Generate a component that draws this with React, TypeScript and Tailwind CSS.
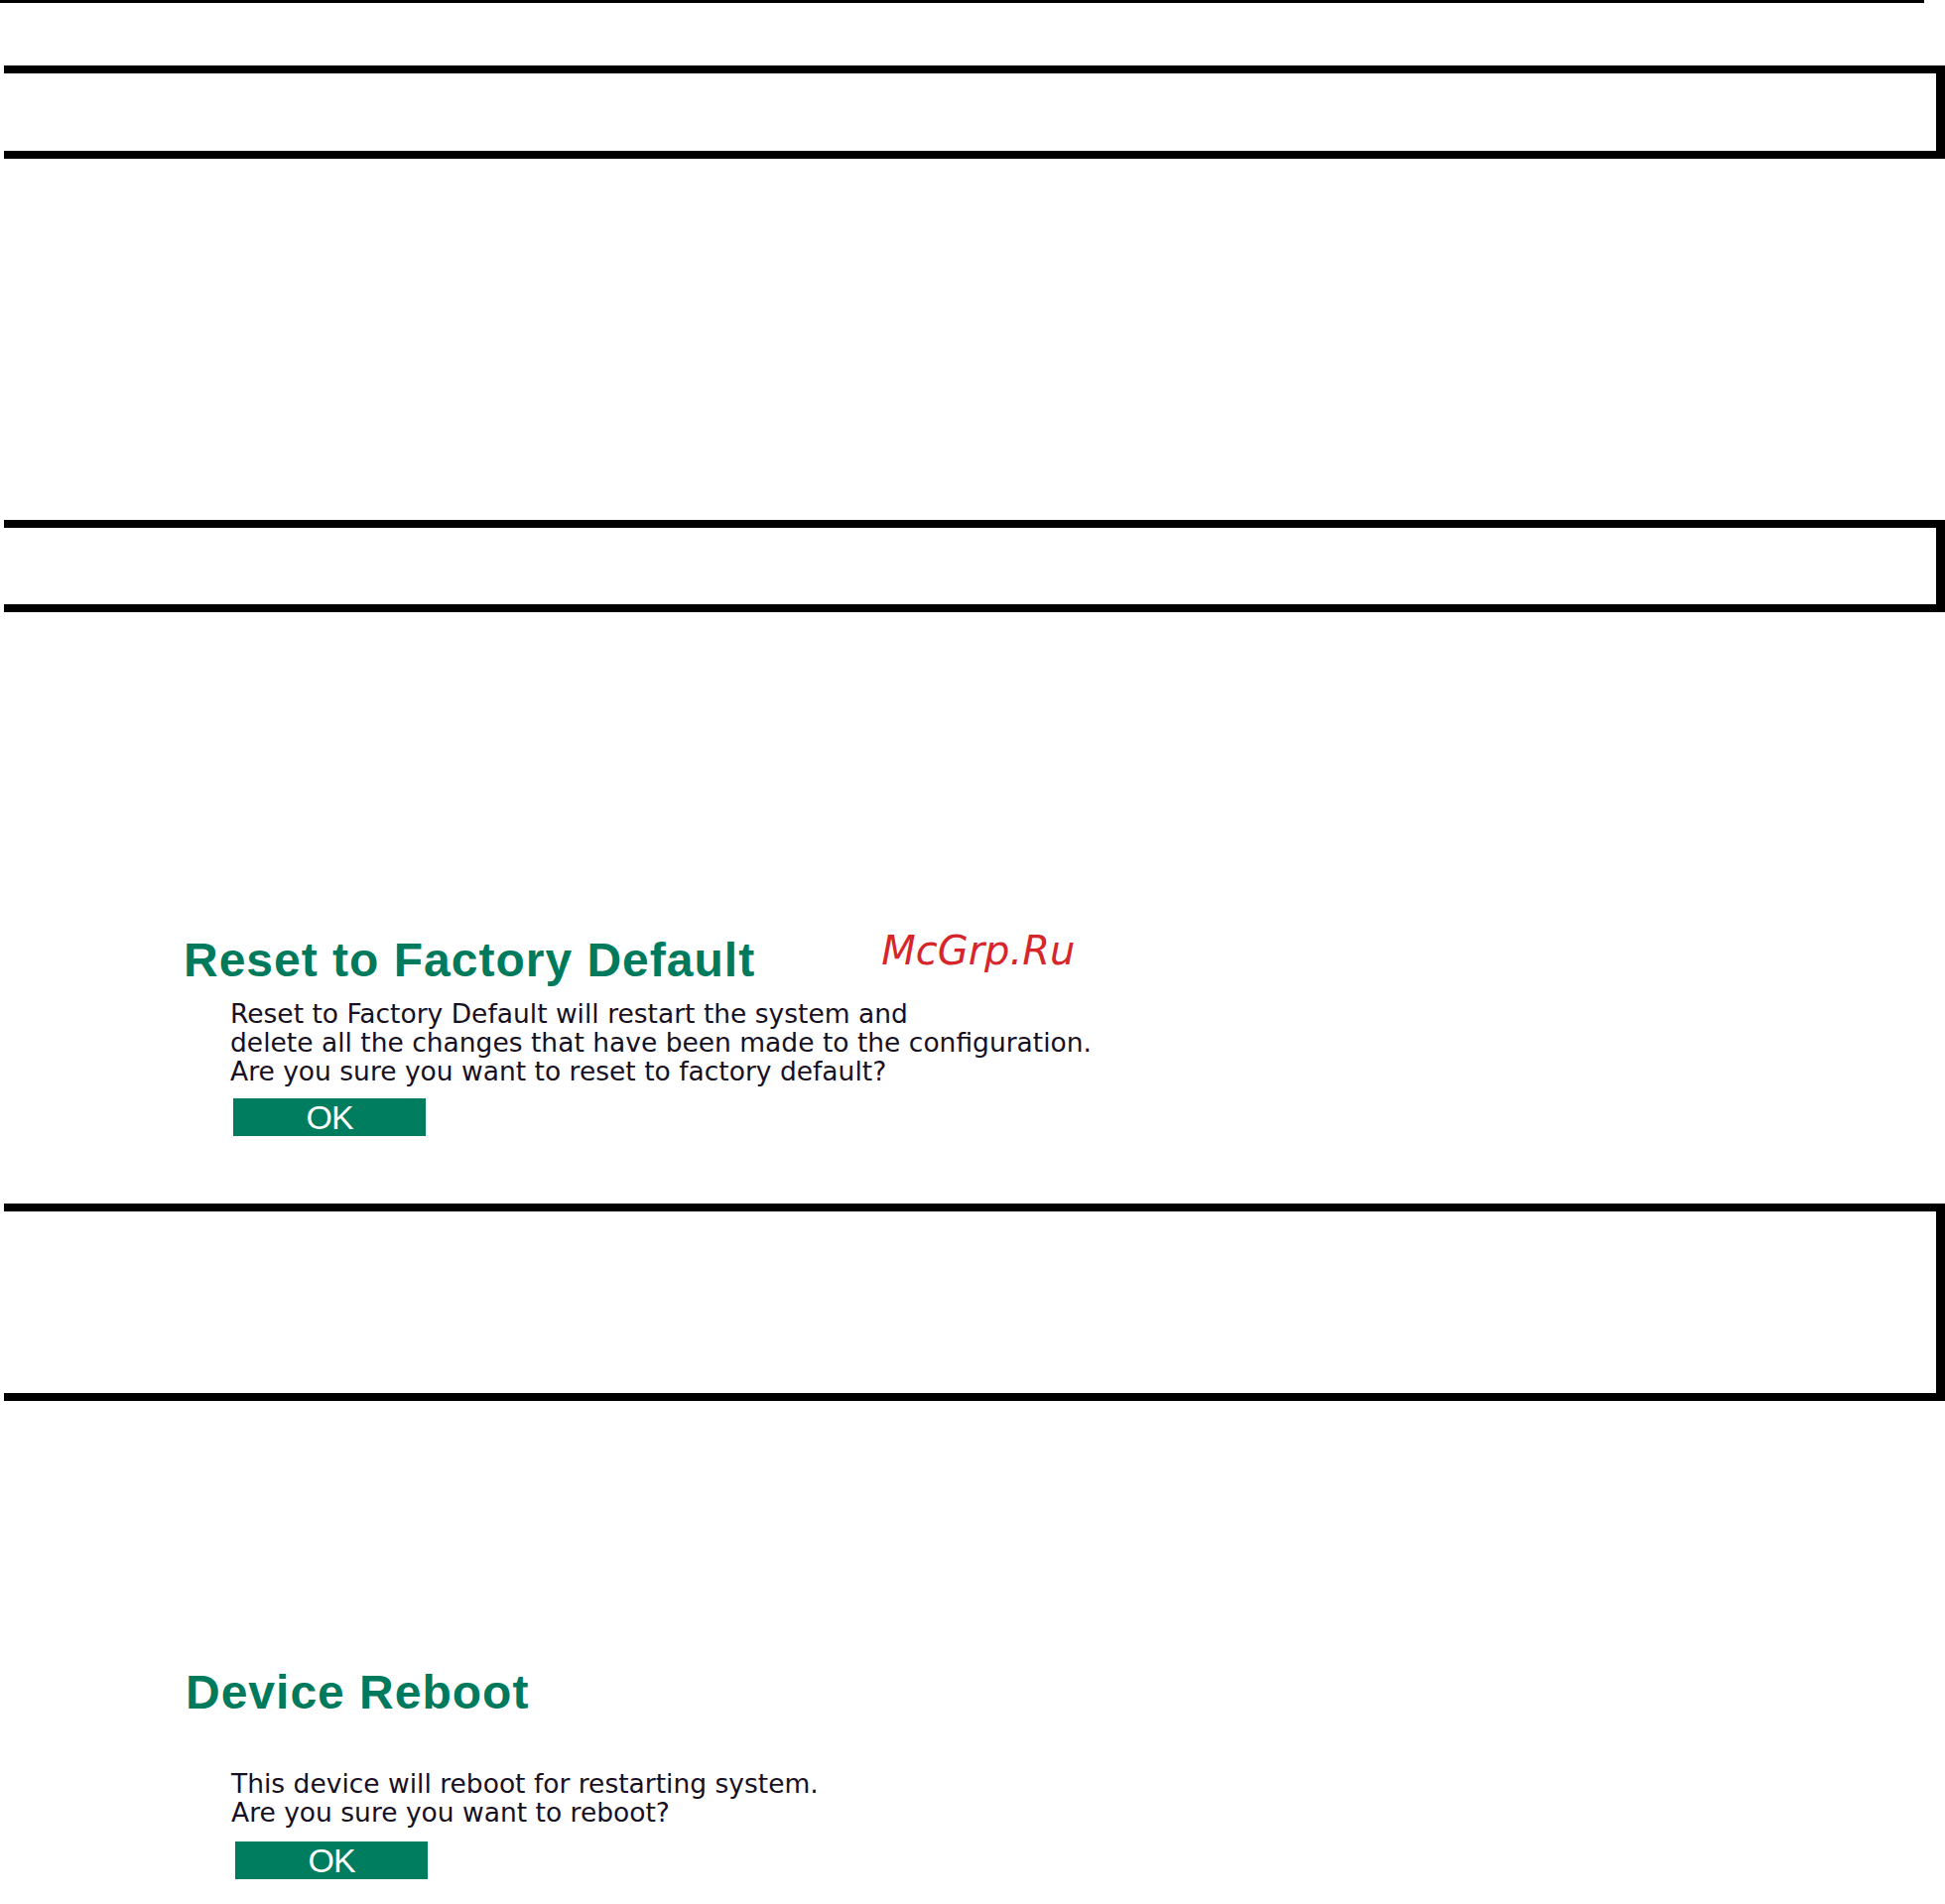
import React from "react";

const bodyFont = "font-['DejaVu_Sans',Verdana,sans-serif]";

function FrameBox({ height, className = "" }: { height: string; className?: string }) {
  return (
    <div
      className={`ml-[4px] w-[1956px] border-y-8 border-r-[9px] border-black ${height} ${className}`}
    />
  );
}

function OkButton({ className = "" }: { className?: string }) {
  return (
    <button
      type="button"
      className={`flex h-[38px] w-[194px] items-center justify-center bg-[#007c5e] font-['Liberation_Sans',Arial,sans-serif] text-[34px] leading-none tracking-[-1px] text-white ${className}`}
    >
      OK
    </button>
  );
}

export default function App() {
  return (
    <div className="min-h-[1919px] w-[1960px] bg-white">
      <div className="h-[3px] w-[1939px] bg-black" />

      <FrameBox height="h-[94px]" className="mt-[63px]" />
      <FrameBox height="h-[93px]" className="mt-[364px]" />

      {/* reset to factory default */}
      <section className="mt-[327px]">
        <div className="flex items-start">
          <h1 className="ml-[185px] font-['Liberation_Sans',Arial,sans-serif] text-[48px] font-bold leading-[48px] tracking-[1px] text-[#007a5c]">
            Reset to Factory Default
          </h1>
          <span className="ml-[127px] mt-[-10px] font-['DejaVu_Sans',sans-serif] text-[40px] italic leading-[48px] text-[#d6262b]">
            McGrp.Ru
          </span>
        </div>
        <div className={`ml-[232px] mt-[15px] text-[26.5px] leading-[29px] text-[#161022] ${bodyFont}`}>
          <p>Reset to Factory Default will restart the system and</p>
          <p>delete all the changes that have been made to the configuration.</p>
          <p>Are you sure you want to reset to factory default?</p>
        </div>
        <OkButton className="ml-[235px] mt-[13px]" />
      </section>

      <FrameBox height="h-[199px]" className="mt-[68px]" />

      {/* device reboot */}
      <section className="mt-[270px]">
        <h1 className="ml-[187px] font-['Liberation_Sans',Arial,sans-serif] text-[48px] font-bold leading-[48px] tracking-[1px] text-[#007a5c]">
          Device Reboot
        </h1>
        <div className={`ml-[233px] mt-[53px] text-[26.5px] leading-[29px] text-[#161022] ${bodyFont}`}>
          <p>This device will reboot for restarting system.</p>
          <p>Are you sure you want to reboot?</p>
        </div>
        <OkButton className="ml-[237px] mt-[15px]" />
      </section>
    </div>
  );
}
